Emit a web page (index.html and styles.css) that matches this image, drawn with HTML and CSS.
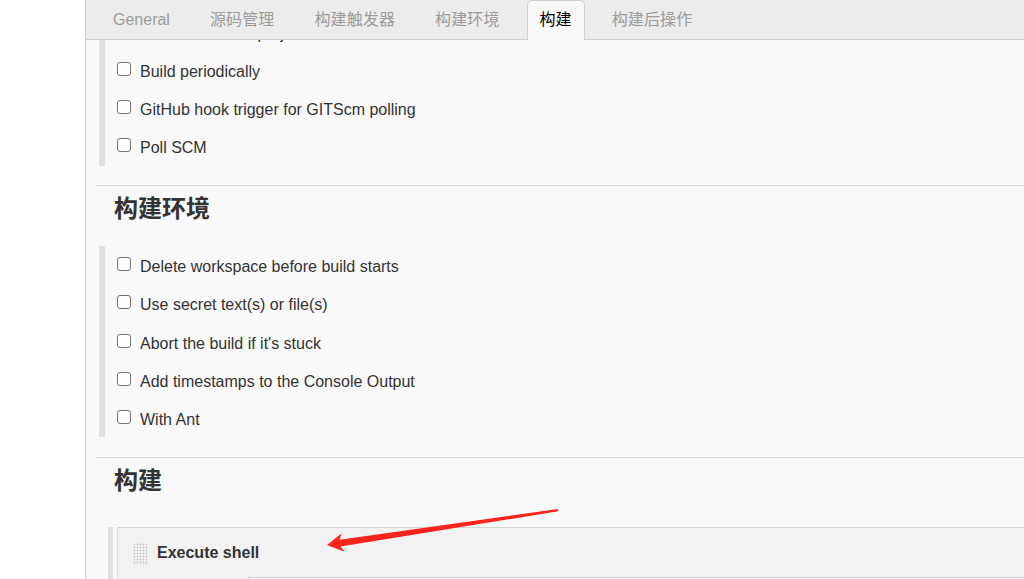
FILE: index.html
```html
<!DOCTYPE html>
<html lang="zh">
<head>
<meta charset="utf-8">
<title>构建配置</title>
<link rel="stylesheet" href="styles.css">
</head>
<body>
<div class="page">
  <aside class="sidebar"></aside>
  <main class="main">
    <nav class="tabbar">
      <span class="tab">General</span>
      <span class="tab zh">源码管理</span>
      <span class="tab zh">构建触发器</span>
      <span class="tab zh">构建环境</span>
      <span class="tab zh active">构建</span>
      <span class="tab zh">构建后操作</span>
    </nav>
    <div class="content">
      <div class="scroll">
        <div class="group first">
          <label class="row"><input type="checkbox" class="cb"><span class="label">Build after other projects are built</span></label>
          <label class="row"><input type="checkbox" class="cb"><span class="label">Build periodically</span></label>
          <label class="row"><input type="checkbox" class="cb"><span class="label">GitHub hook trigger for GITScm polling</span></label>
          <label class="row"><input type="checkbox" class="cb"><span class="label">Poll SCM</span></label>
        </div>

        <section class="section">
          <h2 class="section-title">构建环境</h2>
          <div class="group">
            <label class="row"><input type="checkbox" class="cb"><span class="label">Delete workspace before build starts</span></label>
            <label class="row"><input type="checkbox" class="cb"><span class="label">Use secret text(s) or file(s)</span></label>
            <label class="row"><input type="checkbox" class="cb"><span class="label">Abort the build if it's stuck</span></label>
            <label class="row"><input type="checkbox" class="cb"><span class="label">Add timestamps to the Console Output</span></label>
            <label class="row"><input type="checkbox" class="cb"><span class="label">With Ant</span></label>
          </div>
        </section>

        <section class="section">
          <h2 class="section-title build">构建</h2>
          <div class="step-wrap">
            <div class="step">
              <div class="step-head">
                <span class="handle"></span>
                <span class="step-title">Execute shell</span>
              </div>
              <div class="step-body">
                <div class="field"></div>
              </div>
            </div>
          </div>
        </section>
      </div>
    </div>
  </main>
  <svg class="arrow" width="1024" height="579" viewBox="0 0 1024 579" aria-hidden="true">
    <polygon points="327,545 341.5,533.5 339.6,539.8 557.8,509 558.4,511.2 340.6,546.6 344.5,551.8" fill="#f8231b"/>
  </svg>
</div>
</body>
</html>
```

FILE: styles.css
```css
* { box-sizing: border-box; }

html, body {
  margin: 0;
  padding: 0;
  background: #fff;
  overflow: hidden;
}

body {
  font-family: "Liberation Sans", Arial, "Noto Sans CJK SC", sans-serif;
  font-size: 16px;
  color: #333;
}

.page {
  position: relative;
  display: flex;
  width: 1024px;
  height: 579px;
  overflow: hidden;
}

.sidebar {
  width: 85px;
  flex: none;
  background: #fff;
}

.main {
  flex: 1;
  min-width: 0;
  display: flex;
  flex-direction: column;
  background: #f9f9f9;
  border-left: 1px solid #d2d2d2;
}

.tabbar {
  flex: none;
  height: 40px;
  display: flex;
  align-items: flex-start;
  gap: 14px;
  padding-left: 14px;
  background: #ececec;
  border-bottom: 1px solid #cfcfcf;
  position: relative;
  z-index: 2;
}

.tab {
  height: 39px;
  line-height: 39px;
  padding: 0 13px;
  color: #9c9c9c;
  white-space: nowrap;
}

.tab.zh {
  letter-spacing: 0.12px;
}

.tab.active {
  height: 40px;
  padding: 0 12px;
  line-height: 38px;
  background: #f9f9f9;
  border: 1px solid #cfcfcf;
  border-bottom: none;
  border-radius: 5px 5px 0 0;
  color: #000;
  position: relative;
}

.content {
  flex: 1;
  overflow: hidden;
}

.scroll {
  margin-top: -27.5px;
  width: calc(100% + 30px);
}

.group {
  margin-left: 13px;
  border-left: 6px solid #e0e0e0;
  padding-left: 12px;
  margin-bottom: 19.5px;
}

.row {
  display: flex;
  align-items: flex-start;
  height: 38.25px;
  padding-top: 11px;
  line-height: 18px;
  white-space: nowrap;
}

.label {
  margin-top: 1px;
}

.cb {
  -webkit-appearance: none;
  appearance: none;
  flex: none;
  width: 14px;
  height: 14px;
  margin: 0 9px 0 0;
  border: 1px solid #727272;
  border-radius: 3px;
  background: #fff;
}

.section {
  margin-left: 10px;
  border-top: 1px solid #dcdcdc;
}

.section .group {
  margin-left: 3px;
}

.section-title {
  margin: 0;
  padding: 5px 0 0 18px;
  height: 60px;
  line-height: 32px;
  font-size: 24px;
  font-weight: bold;
  color: #333;
  font-family: "Noto Sans CJK SC", sans-serif;
}

.section-title.build {
  padding-top: 5px;
  height: 69px;
}

.step-wrap {
  margin-left: 12px;
  border-left: 5px solid #e0e0e0;
  padding-left: 4px;
}

.step {
  background: #f2f2f2;
  border: 1px solid #d6d6d6;
  height: 200px;
}

.step-head {
  display: flex;
  align-items: flex-start;
  padding: 15px 0 0 15px;
  height: 49px;
}

.handle {
  flex: none;
  width: 15px;
  height: 22px;
  background-image: radial-gradient(circle, #c9c9c9 0.9px, transparent 1.1px);
  background-size: 3px 3px;
}

.step-title {
  margin-left: 9px;
  margin-top: 0;
  font-weight: bold;
  color: #333;
  line-height: 20px;
}

.step-body {
  padding-left: 130px;
}

.field {
  border: 1px solid #cccccc;
  background: #fff;
  height: 80px;
}

.arrow {
  position: absolute;
  left: 0;
  top: 0;
  pointer-events: none;
  z-index: 5;
}
```
